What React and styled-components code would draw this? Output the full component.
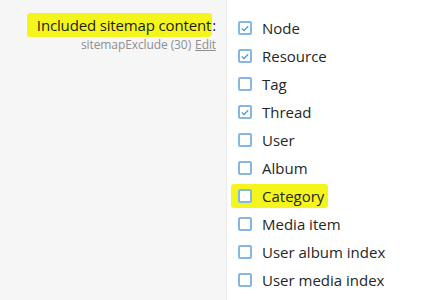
import React from 'react';
import styled, { createGlobalStyle } from 'styled-components';

const GlobalStyle = createGlobalStyle`
  html, body {
    margin: 0;
    padding: 0;
    background: #fff;
  }
  body {
    font-family: "Open Sans", "Noto Sans", sans-serif;
  }
`;

const Row = styled.div`
  display: flex;
  width: 443px;
  height: 300px;
  overflow: hidden;
`;

const LabelPane = styled.div`
  width: 227px;
  flex-shrink: 0;
  background: #f6f6f6;
  border-right: 1px solid #ebebeb;
  box-sizing: border-box;
  padding: 13px 10px 0 0;
  display: flex;
  flex-direction: column;
  align-items: flex-end;
`;

const Label = styled.div`
  font-size: 15px;
  line-height: 24px;
  color: #1c1c1c;
  letter-spacing: -0.15px;
`;

const Mark = styled.span`
  background: #f5f51e;
  padding: 2px 1px 2px 10px;
  border-radius: 3px 2px 4px 2px;
`;

const Hint = styled.div`
  font-size: 12px;
  line-height: 16px;
  color: #8f8f8f;
  letter-spacing: -0.1px;
`;

const EditLink = styled.a`
  color: #8f8f8f;
  text-decoration: underline;
  margin-left: 4px;
`;

const ListPane = styled.ul`
  list-style: none;
  margin: 0;
  padding: 14px 0 0 11px;
  display: flex;
  flex-direction: column;
`;

const Item = styled.li`
  display: flex;
  align-items: center;
  height: 28px;
  font-size: 15px;
  color: #262626;
`;

const Box = styled.span`
  width: 10px;
  height: 10px;
  border: 2px solid #86b7e4;
  border-radius: 2px;
  background: #fff;
  display: flex;
  align-items: center;
  justify-content: center;
  flex-shrink: 0;
`;

const ItemText = styled.span`
  display: inline-flex;
  align-items: center;
  gap: 10px;
  background: ${p => (p.$hl ? '#f5f51e' : 'transparent')};
  margin-left: ${p => (p.$hl ? '-7px' : '0')};
  padding: ${p => (p.$hl ? '2px 4px 2px 7px' : '0')};
  border-radius: 3px;
`;

const Check = () => (
  <svg width="8" height="7" viewBox="0 0 8 7">
    <path d="M0.8 3.6 L3 5.6 L7.2 1.2" fill="none" stroke="#5c9bd8" strokeWidth="1.4" />
  </svg>
);

const items = [
  { name: 'Node', on: true },
  { name: 'Resource', on: true },
  { name: 'Tag' },
  { name: 'Thread', on: true },
  { name: 'User' },
  { name: 'Album' },
  { name: 'Category', hl: true },
  { name: 'Media item' },
  { name: 'User album index' },
  { name: 'User media index' },
];

export default function App() {
  return (
    <>
      <GlobalStyle />
      <Row>
        <LabelPane>
          <Label>
            <Mark>Included sitemap content</Mark>:
          </Label>
          <Hint>
            sitemapExclude (30)<EditLink>Edit</EditLink>
          </Hint>
        </LabelPane>
        <ListPane>
          {items.map(it => (
            <Item key={it.name}>
              <ItemText $hl={it.hl}>
                <Box>{it.on && <Check />}</Box>
                {it.name}
              </ItemText>
            </Item>
          ))}
        </ListPane>
      </Row>
    </>
  );
}
